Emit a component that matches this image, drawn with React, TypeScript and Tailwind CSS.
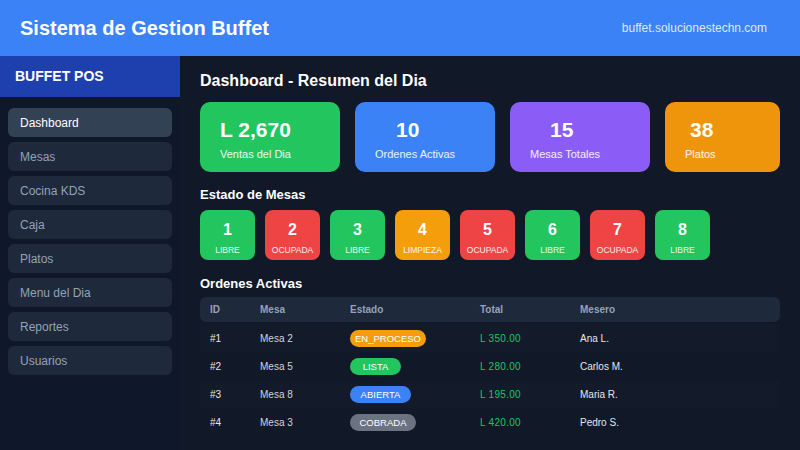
import React from 'react';

const navItems = ['Dashboard', 'Mesas', 'Cocina KDS', 'Caja', 'Platos', 'Menu del Dia', 'Reportes', 'Usuarios'];

const stats = [
  { value: 'L 2,670', label: 'Ventas del Dia', bg: 'bg-[#22c55e]', w: 'w-[140px]', indent: 'pl-0' },
  { value: '10', label: 'Ordenes Activas', bg: 'bg-[#3b82f6]', w: 'w-[140px]', indent: 'pl-[21px]' },
  { value: '15', label: 'Mesas Totales', bg: 'bg-[#8b5cf6]', w: 'w-[140px]', indent: 'pl-[20px]' },
  { value: '38', label: 'Platos', bg: 'bg-[#ef950c]', w: 'w-[115px]', indent: 'pl-[5px]' },
];

type MesaStatus = 'LIBRE' | 'OCUPADA' | 'LIMPIEZA';

const mesas: { n: number; status: MesaStatus }[] = [
  { n: 1, status: 'LIBRE' },
  { n: 2, status: 'OCUPADA' },
  { n: 3, status: 'LIBRE' },
  { n: 4, status: 'LIMPIEZA' },
  { n: 5, status: 'OCUPADA' },
  { n: 6, status: 'LIBRE' },
  { n: 7, status: 'OCUPADA' },
  { n: 8, status: 'LIBRE' },
];

const mesaColor: Record<MesaStatus, string> = {
  LIBRE: 'bg-[#22c55e]',
  OCUPADA: 'bg-[#ef4444]',
  LIMPIEZA: 'bg-[#f59e0b]',
};

// pill widths follow the reference, text centred inside
const ordenes = [
  { id: '#1', mesa: 'Mesa 2', estado: 'EN_PROCESO', badge: 'bg-[#f59e0b] w-[76px]', total: 'L 350.00', mesero: 'Ana L.' },
  { id: '#2', mesa: 'Mesa 5', estado: 'LISTA', badge: 'bg-[#22c55e] w-[51px]', total: 'L 280.00', mesero: 'Carlos M.' },
  { id: '#3', mesa: 'Mesa 8', estado: 'ABIERTA', badge: 'bg-[#3b82f6] w-[61px]', total: 'L 195.00', mesero: 'Maria R.' },
  { id: '#4', mesa: 'Mesa 3', estado: 'COBRADA', badge: 'bg-[#6b7280] w-[66px]', total: 'L 420.00', mesero: 'Pedro S.' },
];

export default function App() {
  return (
    <div className="w-[800px] h-[450px] overflow-hidden flex flex-col bg-[#111827] font-['Liberation_Sans',Arial,sans-serif]">
      {/* Header */}
      <header className="h-[56px] shrink-0 bg-[#3b82f6] flex items-center justify-between pl-5 pr-[33px]">
        <h1 className="text-[20px] font-bold text-white">Sistema de Gestion Buffet</h1>
        <span className="text-[12px] text-[#dbeafe]">buffet.solucionestechn.com</span>
      </header>

      <div className="flex flex-1 min-h-0">
        {/* Sidebar */}
        <aside className="w-[180px] shrink-0 bg-[#0f172a] flex flex-col">
          <div className="h-[41px] bg-[#1e40af] flex items-center px-[15px]">
            <span className="text-[14px] font-bold text-white">BUFFET POS</span>
          </div>
          <nav className="flex flex-col gap-[5px] px-2 pt-[11px]">
            {navItems.map((item, i) => (
              <div
                key={item}
                className={`h-[29px] rounded-md flex items-center px-3 text-[12px] ${
                  i === 0 ? 'bg-[#334155] text-white' : 'bg-[#1e293b] text-[#94a3b8]'
                }`}
              >
                {item}
              </div>
            ))}
          </nav>
        </aside>

        {/* Main */}
        <main className="flex-1 px-5 pt-[15px]">
          <h2 className="text-[16px] font-bold text-white leading-5">Dashboard - Resumen del Dia</h2>

          <div className="flex gap-[15px] mt-[11px]">
            {stats.map((s) => (
              <div key={s.label} className={`${s.w} h-[70px] rounded-[10px] ${s.bg} px-5 pt-[16px]`}>
                <div className={`text-[21px] font-bold text-white leading-6 ${s.indent}`}>{s.value}</div>
                <div className="text-[11px] text-white/90 mt-[4px]">{s.label}</div>
              </div>
            ))}
          </div>

          <h3 className="text-[13px] font-bold text-white mt-[15px] leading-4">Estado de Mesas</h3>
          <div className="flex gap-[10px] mt-[7px]">
            {mesas.map((m) => (
              <div
                key={m.n}
                className={`w-[55px] h-[50px] rounded-lg ${mesaColor[m.status]} flex flex-col items-center pt-[10px]`}
              >
                <span className="text-[16px] font-bold text-white leading-5">{m.n}</span>
                <span className="text-[8.5px] text-white/90 mt-[6px] leading-none">{m.status}</span>
              </div>
            ))}
          </div>

          <h3 className="text-[13px] font-bold text-white mt-[16px] leading-4">Ordenes Activas</h3>
          <div className="mt-[5px] text-[10px]">
            <div className="h-[25px] rounded-md bg-[#1e293b] flex items-center px-[10px] font-bold text-[#94a3b8]">
              <span className="w-[50px]">ID</span>
              <span className="w-[90px]">Mesa</span>
              <span className="w-[130px]">Estado</span>
              <span className="w-[100px]">Total</span>
              <span>Mesero</span>
            </div>
            {ordenes.map((o, i) => (
              <div
                key={o.id}
                className={`h-[28px] flex items-center px-[10px] ${i % 2 === 0 ? 'bg-[#131a2a]' : ''} ${i === 0 ? 'mt-[2px]' : ''}`}
              >
                <span className="w-[50px] text-[#e5e7eb]">{o.id}</span>
                <span className="w-[90px] text-[#d1d5db]">{o.mesa}</span>
                <span className="w-[130px]">
                  <span className={`inline-block ${o.badge} text-center text-white text-[9.5px] rounded-full leading-[17px]`}>
                    {o.estado}
                  </span>
                </span>
                <span className="w-[100px] text-[#22c55e] tracking-[0.3px]">{o.total}</span>
                <span className="text-[#e5e7eb]">{o.mesero}</span>
              </div>
            ))}
          </div>
        </main>
      </div>
    </div>
  );
}
